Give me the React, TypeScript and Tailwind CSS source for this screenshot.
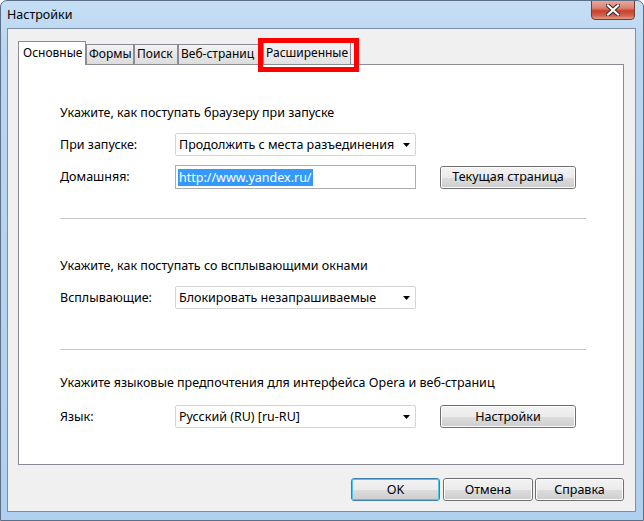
import React from "react";

function Arrow() {
  return (
    <svg width="8" height="5" viewBox="0 0 8 5" className="absolute right-[4px] top-[9px]">
      <path d="M0 0 H7 L3.5 4 Z" fill="#000" />
    </svg>
  );
}

function Combo({ text }: { text: string }) {
  return (
    <div className="relative w-[241px] h-[23px] border border-[#d5d5d5] rounded-[2px] bg-white flex items-center pl-[3px] text-black">
      <span className="whitespace-nowrap">{text}</span>
      <Arrow />
    </div>
  );
}

function WinButton({ label, w, def }: { label: string; w: string; def?: boolean }) {
  return (
    <div
      className={
        "h-[23px] rounded-[3px] border flex items-center justify-center text-black " +
        w +
        (def ? " border-[#3c7fb1]" : " border-[#707070]")
      }
    >
      <div
        className={
          "w-full h-full rounded-[2px] border flex items-center justify-center bg-[linear-gradient(to_bottom,#f2f2f2_0%,#ebebeb_50%,#dddddd_51%,#cfcfcf_100%)] " +
          (def ? "border-[#48c6f5]" : "border-[#fcfcfc]")
        }
      >
        {label}
      </div>
    </div>
  );
}

export default function App() {
  return (
    <div className="w-[644px] h-[521px] relative overflow-hidden font-['Noto_Sans',sans-serif] text-[12.5px] leading-[16px] text-black bg-[linear-gradient(to_bottom,#c5def4_0%,#b9d6f0_10%,#afd0ee_100%)] border border-[#5d6f86] rounded-t-[7px]">
      {/* title bar */}
      <div className="h-[27px] flex items-center pl-[6px] pt-[1px] text-black">Настройки</div>
      {/* close button */}
      <div className="absolute top-[-1px] right-[8px] w-[44px] h-[20px] rounded-b-[4px] border border-[#7a3a33] bg-[linear-gradient(to_bottom,#e9a99c_0%,#dc7f6f_40%,#c8402a_55%,#d0614d_80%,#e19b88_100%)] flex items-center justify-center">
        <svg width="14" height="12" viewBox="0 0 14 12">
          <path d="M2 1.5 L12 10.5 M12 1.5 L2 10.5" stroke="#3b2a2a" strokeWidth="4.2" strokeLinecap="square" />
          <path d="M2 1.5 L12 10.5 M12 1.5 L2 10.5" stroke="#ffffff" strokeWidth="2.2" strokeLinecap="square" />
        </svg>
      </div>

      {/* client area */}
      <div className="ml-[6px] mr-[7px] h-[484px] border border-[#7f8ea4] bg-[#f0f0f0] flex flex-col pl-[10px] pt-[12px]">
        {/* tabs */}
        <div className="flex items-end h-[23px] relative z-10 text-[12px]">
          <div className="w-[68px] h-[24px] -mb-[1px] border border-b-0 border-[#898c95] bg-white pl-[4px] pt-[3px] whitespace-nowrap">
            Основные
          </div>
          <div className="w-[48px] h-[20px] border border-b-0 border-[#898c95] bg-[linear-gradient(to_bottom,#f2f2f2,#dcdcdc)] pl-[2px] pt-[1px] whitespace-nowrap">
            Формы
          </div>
          <div className="w-[44px] h-[20px] border border-b-0 border-[#898c95] bg-[linear-gradient(to_bottom,#f2f2f2,#dcdcdc)] pl-[2px] pt-[1px] whitespace-nowrap">
            Поиск
          </div>
          <div className="w-[85px] h-[20px] border border-b-0 border-[#898c95] bg-[linear-gradient(to_bottom,#f2f2f2,#dcdcdc)] pl-[2px] pt-[1px] whitespace-nowrap">
            Веб-страниц
          </div>
          <div className="w-[88px] h-[22px] border border-b-0 border-[#898c95] bg-[linear-gradient(to_bottom,#f4f4f4,#e2e2e2)] pl-[2px] pt-[2px] whitespace-nowrap">
            Расширенные
          </div>
        </div>

        {/* panel */}
        <div className="w-[606px] h-[401px] border border-[#898c95] bg-white flex flex-col pl-[41px]">
          <div className="mt-[40px]">Укажите, как поступать браузеру при запуске</div>
          <div className="mt-[12px] flex items-center h-[23px]">
            <div className="w-[115px]">При запуске:</div>
            <Combo text="Продолжить с места разъединения" />
          </div>
          <div className="mt-[9px] flex items-center h-[24px]">
            <div className="w-[115px]">Домашняя:</div>
            <div className="w-[241px] h-[24px] border border-[#abadb3] bg-white flex items-center pl-[2px]">
              <span className="bg-[#3399ff] text-white px-[1px] leading-[17px]">http://www.yandex.ru/</span>
            </div>
            <div className="ml-[24px]">
              <WinButton label="Текущая страница" w="w-[136px]" />
            </div>
          </div>
          <div className="mt-[29px] w-[526px] h-[1px] bg-[#c8c8c8]" />

          <div className="mt-[39px]">Укажите, как поступать со всплывающими окнами</div>
          <div className="mt-[12px] flex items-center h-[23px]">
            <div className="w-[115px]">Всплывающие:</div>
            <Combo text="Блокировать незапрашиваемые" />
          </div>
          <div className="mt-[40px] w-[526px] h-[1px] bg-[#c8c8c8]" />

          <div className="mt-[25px]">Укажите языковые предпочтения для интерфейса Opera и веб-страниц</div>
          <div className="mt-[14px] flex items-center h-[23px]">
            <div className="w-[115px]">Язык:</div>
            <Combo text="Русский (RU) [ru-RU]" />
            <div className="ml-[24px]">
              <WinButton label="Настройки" w="w-[136px]" />
            </div>
          </div>
        </div>

        {/* bottom buttons */}
        <div className="w-[606px] mt-[13px] flex justify-end">
          <WinButton label="OK" w="w-[89px]" def />
          <div className="ml-[3px]">
            <WinButton label="Отмена" w="w-[90px]" />
          </div>
          <div className="ml-[2px]">
            <WinButton label="Справка" w="w-[89px]" />
          </div>
        </div>
      </div>

      {/* red highlight annotation */}
      <div className="absolute left-[257px] top-[37px] w-[101px] h-[34px] border-[5px] border-[#ff0000] z-20" />
    </div>
  );
}
